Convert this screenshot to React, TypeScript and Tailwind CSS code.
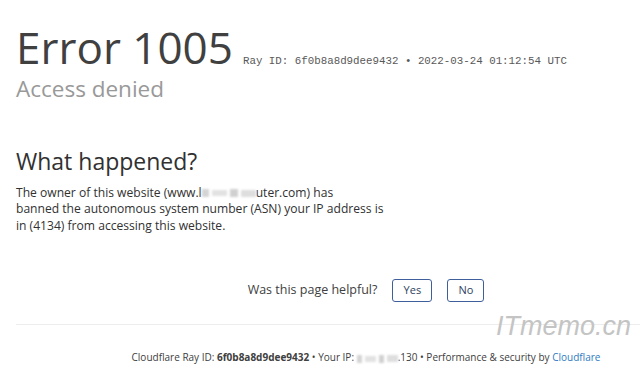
// Cloudflare "Error 1005" access denied page

function Blur({ w }: { w: number }) {
  return (
    <span
      className="inline-flex h-[9px] items-center gap-[3px] align-middle blur-[1px]"
      style={{ width: w }}
    >
      <span className="h-[8px] flex-1 bg-[#d4d4d4]" />
      <span className="h-[6px] flex-[2] bg-[#e2e2e2]" />
      <span className="h-[8px] flex-1 bg-[#d0d0d0]" />
      <span className="h-[7px] flex-[2] bg-[#dedede]" />
    </span>
  );
}

export default function App() {
  return (
    <div className="relative h-[373px] w-[640px] overflow-hidden bg-white font-['Open_Sans',sans-serif]">
      <div className="w-[732px] px-4 pt-[25px]">
        {/* Header */}
        <div className="flex items-baseline gap-[10px]">
          <h1 className="text-[44px] leading-none text-[#404040]">Error 1005</h1>
          <span className="font-['Liberation_Mono',monospace] text-[10.8px] text-[#595959]">
            Ray ID: 6f0b8a8d9dee9432 • 2022-03-24 01:12:54 UTC
          </span>
        </div>
        <h2 className="mt-[9px] text-[22.5px] leading-none text-[#999999]">Access denied</h2>

        {/* What happened */}
        <h2 className="mt-[49px] text-[23px] leading-none text-[#313131]">What happened?</h2>
        <p className="mt-[12px] whitespace-nowrap text-[12.1px] leading-[16.5px] text-[#313131]">
          The owner of this website (www.l<Blur w={54} />uter.com) has
          <br />
          banned the autonomous system number (ASN) your IP address is
          <br />
          in (4134) from accessing this website.
        </p>

        {/* Feedback */}
        <div className="mt-[45px] flex items-center justify-center gap-[15px]">
          <span className="text-[12.5px] text-[#404040]">Was this page helpful?</span>
          <button className="h-[23px] w-[40px] rounded-[3px] border border-[#3f5f9c] text-[11px] text-[#2e3f5e]">
            Yes
          </button>
          <button className="h-[23px] w-[37px] rounded-[3px] border border-[#3f5f9c] text-[11px] text-[#2e3f5e]">
            No
          </button>
        </div>

        <div className="mt-[22px] border-t border-[#ededed]" />

        {/* Footer */}
        <p className="mt-[25px] text-center text-[10px] text-[#404040]">
          Cloudflare Ray ID: <span className="font-bold">6f0b8a8d9dee9432</span> • Your IP:{" "}
          <Blur w={41} />.130 • Performance &amp; security by{" "}
          <span className="text-[#2f7bbf]">Cloudflare</span>
        </p>
      </div>

      {/* Watermark */}
      <span className="absolute left-[496px] top-[306px] font-['Liberation_Sans',sans-serif] text-[27px] italic text-[#c4c4c4]">
        ITmemo.cn
      </span>
    </div>
  );
}
